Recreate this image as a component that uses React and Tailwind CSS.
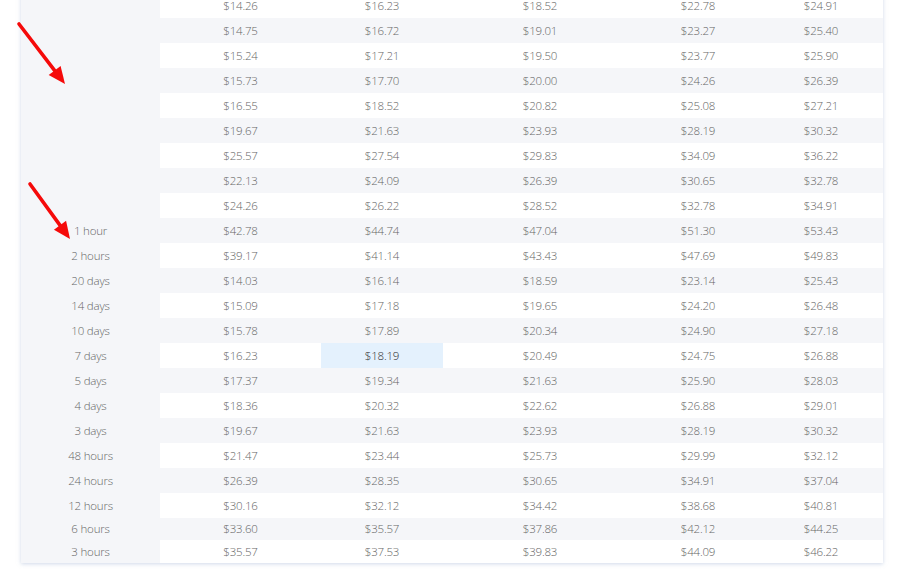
import React from "react";

const rows = [
  ["", "$14.26", "$16.23", "$18.52", "$22.78", "$24.91"],
  ["", "$14.75", "$16.72", "$19.01", "$23.27", "$25.40"],
  ["", "$15.24", "$17.21", "$19.50", "$23.77", "$25.90"],
  ["", "$15.73", "$17.70", "$20.00", "$24.26", "$26.39"],
  ["", "$16.55", "$18.52", "$20.82", "$25.08", "$27.21"],
  ["", "$19.67", "$21.63", "$23.93", "$28.19", "$30.32"],
  ["", "$25.57", "$27.54", "$29.83", "$34.09", "$36.22"],
  ["", "$22.13", "$24.09", "$26.39", "$30.65", "$32.78"],
  ["", "$24.26", "$26.22", "$28.52", "$32.78", "$34.91"],
  ["1 hour", "$42.78", "$44.74", "$47.04", "$51.30", "$53.43"],
  ["2 hours", "$39.17", "$41.14", "$43.43", "$47.69", "$49.83"],
  ["20 days", "$14.03", "$16.14", "$18.59", "$23.14", "$25.43"],
  ["14 days", "$15.09", "$17.18", "$19.65", "$24.20", "$26.48"],
  ["10 days", "$15.78", "$17.89", "$20.34", "$24.90", "$27.18"],
  ["7 days", "$16.23", "$18.19", "$20.49", "$24.75", "$26.88"],
  ["5 days", "$17.37", "$19.34", "$21.63", "$25.90", "$28.03"],
  ["4 days", "$18.36", "$20.32", "$22.62", "$26.88", "$29.01"],
  ["3 days", "$19.67", "$21.63", "$23.93", "$28.19", "$30.32"],
  ["48 hours", "$21.47", "$23.44", "$25.73", "$29.99", "$32.12"],
  ["24 hours", "$26.39", "$28.35", "$30.65", "$34.91", "$37.04"],
  ["12 hours", "$30.16", "$32.12", "$34.42", "$38.68", "$40.81"],
  ["6 hours", "$33.60", "$35.57", "$37.86", "$42.12", "$44.25"],
  ["3 hours", "$35.57", "$37.53", "$39.83", "$44.09", "$46.22"],
];

// red annotation arrow
const Arrow = ({ x1, y1, x2, y2 }) => {
  const dx = x2 - x1;
  const dy = y2 - y1;
  const len = Math.hypot(dx, dy);
  const ux = dx / len;
  const uy = dy / len;
  const bx = x2 - ux * 17;
  const by = y2 - uy * 17;
  const px = -uy * 7.5;
  const py = ux * 7.5;
  return (
    <g>
      <line x1={x1} y1={y1} x2={bx + ux * 2} y2={by + uy * 2} stroke="#f50a0a" strokeWidth="3.6" strokeLinecap="round" />
      <polygon points={`${x2},${y2} ${bx + px},${by + py} ${bx - px},${by - py}`} fill="#f50a0a" />
    </g>
  );
};

const App = () => {
  return (
    <div className="relative w-[900px] h-[569px] bg-white overflow-hidden font-['Open_Sans',sans-serif]">
      <div className="ml-[21px] w-[862px] -mt-[6px] bg-white shadow-[0_1px_4px_rgba(170,185,215,0.55)] text-[11.5px] font-light text-[#666666] tracking-[-0.2px]">
        {rows.map((r, i) => {
          const h = i === 0 ? "h-[24px]" : i === 21 ? "h-[22px]" : i === 22 ? "h-[23px]" : "h-[25px]";
          const bg = i % 2 === 1 ? "bg-[#f5f6f9]" : "bg-white";
          return (
            <div key={i} className={`grid grid-cols-[139px_161px_122px_194px_122px_124px] ${h}`}>
              <div className="flex items-center justify-center bg-[#f5f6f9]">{r[0]}</div>
              {r.slice(1).map((v, j) => {
                const hl = i === 14 && j === 1;
                return (
                  <div
                    key={j}
                    className={`flex items-center justify-center ${hl ? "bg-[#e4f1fd] text-[#2f2f2f]" : bg}`}
                  >
                    {v}
                  </div>
                );
              })}
            </div>
          );
        })}
      </div>

      <svg className="absolute left-0 top-0" width="120" height="260" viewBox="0 0 120 260">
        <Arrow x1={19} y1={24} x2={65} y2={84} />
        <Arrow x1={30} y1={184} x2={70} y2={239} />
      </svg>
    </div>
  );
};

export default App;
